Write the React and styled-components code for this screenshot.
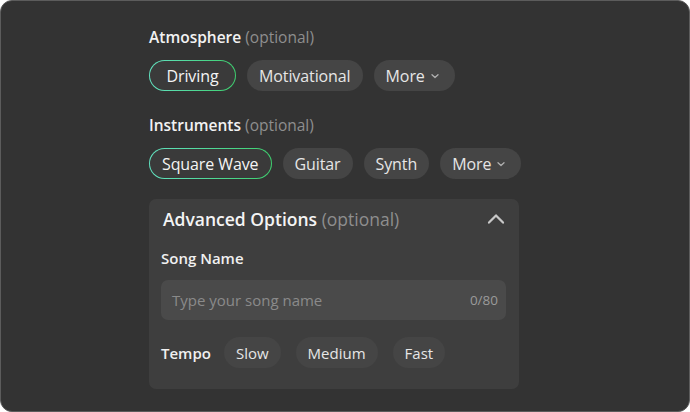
import React from 'react';
import styled, { createGlobalStyle, css } from 'styled-components';

const Global = createGlobalStyle`
  html, body { margin: 0; padding: 0; background: #fff; }
  body { font-family: 'Open Sans', 'Noto Sans', sans-serif; }
  * { box-sizing: border-box; }
`;

const Frame = styled.div`
  width: 690px;
  height: 412px;
  background: #333333;
  border: 1px solid #5c5c5c;
  border-radius: 12px;
  padding: 26px 0 0 148px;
  display: flex;
  flex-direction: column;
  overflow: hidden;
`;

const Section = styled.div`
  display: flex;
  flex-direction: column;
  gap: 12px;
  margin-bottom: ${p => (p.$last ? 20 : 24)}px;
`;

const Label = styled.div`
  color: #f2f2f2;
  font-size: 15.5px;
  font-weight: 600;
  line-height: 21px;
  span {
    color: #8e8e8e;
    font-weight: 500;
  }
`;

const ChipRow = styled.div`
  display: flex;
  align-items: center;
  gap: 11px;
`;

const Chip = styled.button`
  height: 31px;
  min-width: ${p => p.$minWidth || 0}px;
  padding: 0 ${p => (p.$more ? '15px 0 12px' : '12px')};
  border-radius: 16px;
  border: none;
  background: #454545;
  color: #e6e6e6;
  font-family: inherit;
  font-size: ${p => p.$size || 16}px;
  font-weight: 500;
  letter-spacing: ${p => (p.$size ? 0 : -0.1)}px;
  display: inline-flex;
  align-items: center;
  justify-content: center;
  gap: 5px;
  cursor: pointer;
  ${p =>
    p.$active &&
    css`
      border: 1px solid transparent;
      background:
        linear-gradient(#3a3a3a, #3a3a3a) padding-box,
        linear-gradient(90deg, #62e2c0, #3ecf6e) border-box;
      color: #f4f4f4;
    `}
`;

const Panel = styled.div`
  width: 370px;
  background: #3e3e3e;
  border-radius: 7px;
  padding: 8px 13px 21px 12px;
  display: flex;
  flex-direction: column;
`;

const PanelHead = styled.div`
  display: flex;
  align-items: center;
  justify-content: space-between;
  height: 24px;
  padding-left: 2px;
  color: #f4f4f4;
  font-size: 17.5px;
  font-weight: 600;
  span {
    color: #8e8e8e;
    font-weight: 500;
  }
`;

const FieldLabel = styled.div`
  margin-top: 17px;
  color: #f0f0f0;
  font-size: 15px;
  font-weight: 600;
  line-height: 21px;
`;

const InputBox = styled.div`
  margin-top: 11px;
  height: 40px;
  border-radius: 7px;
  background: #4a4a4a;
  display: flex;
  align-items: center;
  justify-content: space-between;
  padding: 0 8px 0 11px;
  font-size: 15px;
  color: #8a8a8a;
`;

const Counter = styled.span`
  font-size: 13.5px;
  color: #9a9a9a;
`;

const TempoRow = styled.div`
  margin-top: 17px;
  display: flex;
  align-items: center;
  gap: 15px;
`;

const TempoLabel = styled.span`
  color: #f0f0f0;
  font-size: 15px;
  font-weight: 600;
  margin-right: -2px;
`;

const Chevron = ({ up, size = 10, color = '#b0b0b0', width = 1.3 }) => (
  <svg width={size} height={size} viewBox="0 0 10 10" fill="none">
    <path
      d={up ? 'M1.5 6.8 L5 3.2 L8.5 6.8' : 'M2 3.8 L5 6.6 L8 3.8'}
      stroke={color}
      strokeWidth={width}
      strokeLinecap="round"
      strokeLinejoin="round"
    />
  </svg>
);

const Group = ({ title, items, activeIndex, minWidth, last }) => (
  <Section $last={last}>
    <Label>
      {title} <span>(optional)</span>
    </Label>
    <ChipRow>
      {items.map((it, i) => (
        <Chip key={it} $active={i === activeIndex} $minWidth={i === activeIndex ? minWidth : 0}>
          {it}
        </Chip>
      ))}
      <Chip $more>
        More <Chevron />
      </Chip>
    </ChipRow>
  </Section>
);

export default function App() {
  return (
    <>
      <Global />
      <Frame>
        <Group title="Atmosphere" items={['Driving', 'Motivational']} activeIndex={0} minWidth={87} />
        <Group title="Instruments" items={['Square Wave', 'Guitar', 'Synth']} activeIndex={0} last />
        <Panel>
          <PanelHead>
            <div>
              Advanced Options <span>(optional)</span>
            </div>
            <Chevron up size={20} width={1.1} color="#c8c8c8" />
          </PanelHead>
          <FieldLabel>Song Name</FieldLabel>
          <InputBox>
            <span>Type your song name</span>
            <Counter>0/80</Counter>
          </InputBox>
          <TempoRow>
            <TempoLabel>Tempo</TempoLabel>
            <Chip $size={15}>Slow</Chip>
            <Chip $size={15}>Medium</Chip>
            <Chip $size={15}>Fast</Chip>
          </TempoRow>
        </Panel>
      </Frame>
    </>
  );
}
